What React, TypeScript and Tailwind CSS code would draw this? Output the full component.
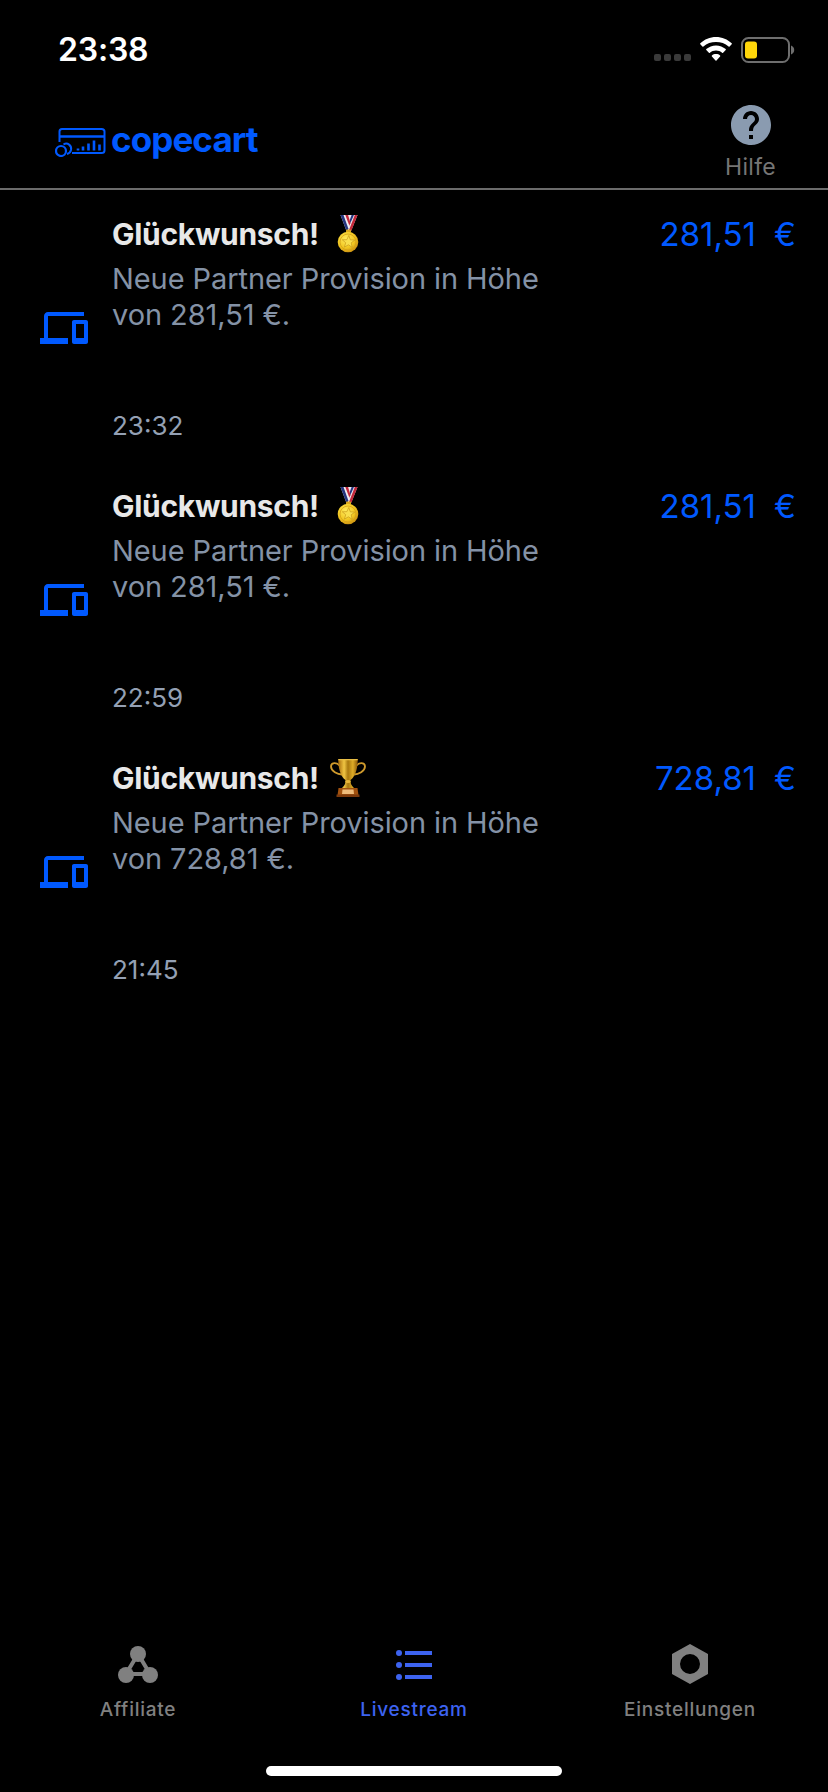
import { MdDevices, MdHelp } from 'react-icons/md'

type Award = 'medal' | 'trophy'

interface Sale {
  amount: string
  time: string
  award: Award
}

const sales: Sale[] = [
  { amount: '281,51', time: '23:32', award: 'medal' },
  { amount: '281,51', time: '22:59', award: 'medal' },
  { amount: '728,81', time: '21:45', award: 'trophy' },
]

function MedalIcon() {
  return (
    <svg className="h-10 w-10" viewBox="0 0 40 40">
      <defs>
        <radialGradient id="medal" cx="0.4" cy="0.35" r="0.7">
          <stop offset="0" stopColor="#ffe95c" />
          <stop offset="0.6" stopColor="#f2c822" />
          <stop offset="1" stopColor="#c98d10" />
        </radialGradient>
      </defs>
      <path d="M19.500 1h10l-6.500 16h-5z" fill="#e9e9f2" />
      <path d="M23.600 1h2.300l-6 14h-1.500z" fill="#24357f" />
      <path d="M26.800 1h2.700l-6 15.500h-2.700z" fill="#c4283a" />
      <path d="M12.500 1h7.600l2.400 8-2.500 8h-1.500z" fill="#f1eef4" />
      <path d="M12.500 1h3l4.800 13.500-.8 2.500h-1z" fill="#24357f" />
      <path d="M17.300 1h2.800l2.400 8-1.200 2.500z" fill="#c4283a" />
      <rect x="18" y="15.500" width="5" height="3.500" rx="1" fill="#d9a51c" />
      <circle cx="20" cy="28" r="10.300" fill="url(#medal)" />
      <circle cx="20" cy="28" r="8" fill="none" stroke="#d6a017" strokeWidth="0.800" />
      <path
        d="M20.800 21.500l1.500 4.300 4.500.3-3.600 2.700 1 4.500-3.800-2.500-4 2.300 1.300-4.400-3.400-2.900 4.500-.1z"
        fill="#f9df4d"
        stroke="#c99a18"
        strokeWidth="0.700"
      />
    </svg>
  )
}

function TrophyIcon() {
  return (
    <svg className="h-10 w-10" viewBox="0 0 40 40">
      <defs>
        <linearGradient id="cup" x1="0" x2="1" y1="0" y2="0">
          <stop offset="0" stopColor="#a86c0c" />
          <stop offset="0.3" stopColor="#f0c543" />
          <stop offset="0.5" stopColor="#a8780f" />
          <stop offset="0.750" stopColor="#deac27" />
          <stop offset="1" stopColor="#8a5607" />
        </linearGradient>
      </defs>
      <path
        d="M11.500 7.500C9 4.200 3 4 3 8.500c0 4.500 6.500 8 11 8M28.500 7.500C31 4.200 37 4 37 8.500c0 4.500-6.500 8-11 8"
        fill="none"
        stroke="#cf9a2c"
        strokeWidth="1.800"
      />
      <path
        d="M10.300 1h19.400c.2 9-2.200 17.500-7.200 21 0 3 .5 5.500 3.500 8H14c3-2.500 3.500-5 3.500-8-5-3.500-7.400-12-7.200-21z"
        fill="url(#cup)"
      />
      <path d="M10.300 1h19.400v1.300H10.300z" fill="#e7bd45" />
      <ellipse cx="20" cy="23.500" rx="2.800" ry="1.500" fill="#e9b83a" />
      <path d="M10.500 30h19l1 7.500h-21z" fill="#a3520f" />
      <path d="M8.500 36.500h23V39h-23z" fill="#7d3a0c" />
      <path d="M14.500 31.500h11l.5 4.500H14z" fill="#f0bd7c" />
    </svg>
  )
}

function StatusBar() {
  return (
    <div className="flex h-[100px] items-center justify-between pr-[33px] pl-[58px]">
      <span className="text-[32px] leading-9 font-semibold tracking-[-0.2px] text-white">
        23:38
      </span>
      <div className="flex items-center">
        <div className="mt-[15px] flex gap-[3px]">
          <span className="size-[7px] rounded-[2px] bg-[#3a3a3a]" />
          <span className="size-[7px] rounded-[2px] bg-[#3a3a3a]" />
          <span className="size-[7px] rounded-[2px] bg-[#3a3a3a]" />
          <span className="size-[7px] rounded-[2px] bg-[#3a3a3a]" />
        </div>
        <svg className="mb-0.5 ml-[9px] h-6 w-8" viewBox="0 0 32 24" fill="#fff">
          <path d="M16 0C10 0 4.400 2.300.3 6.300c-.3.3-.3.7 0 1l2.100 2.200c.3.300.7.300 1 0C6.800 6.300 11.200 4.900 16 4.900s9.200 1.400 12.600 4.600c.3.300.7.300 1 0l2.100-2.200c.3-.3.3-.7 0-1C27.600 2.300 22 0 16 0z" />
          <path d="M16 8.400c-3.700 0-7.100 1.400-9.700 3.700-.3.300-.3.700 0 1l2.600 2.600c.3.300.7.300 1 0 1.600-1.400 3.800-2.300 6.100-2.300s4.500.9 6.100 2.300c.3.300.7.300 1 0l2.600-2.600c.3-.3.3-.7 0-1-2.600-2.300-6-3.700-9.700-3.700z" />
          <path d="M16 17.100c-1.600 0-3 .5-4.100 1.400-.3.300-.3.700 0 1l3.600 3.900c.3.300.7.300 1 0l3.600-3.900c.3-.3.3-.7 0-1-1.100-.9-2.500-1.400-4.100-1.400z" />
        </svg>
        <svg className="ml-[9px] h-[26px] w-[54px]" viewBox="0 0 54 26">
          <rect x="1" y="1" width="47" height="24" rx="6.500" fill="none" stroke="#6e6e6e" strokeWidth="2" />
          <rect x="4" y="4.500" width="12" height="17" rx="3" fill="#ffd60a" />
          <path d="M50 8.500c2 .8 3.200 2.500 3.200 4.500S52 16.700 50 17.500z" fill="#6e6e6e" />
        </svg>
      </div>
    </div>
  )
}

function Logo() {
  return (
    <div className="flex items-center text-[#0059ff]">
      <svg className="mt-1.5 h-[30px] w-[52px]" viewBox="0 0 52 30" fill="none" stroke="currentColor" strokeWidth="2">
        <path d="M4.500 15V4.500C4.500 2.800 5.500 2 7 2h39.500C48 2 49.500 2.800 49.500 4.500v19c0 1.700-1.500 2.500-3 2.500H17" />
        <path d="M5 9.500h44.500" strokeWidth="2.600" />
        <circle cx="6" cy="24" r="5" strokeWidth="2.200" />
        <path d="M8.500 17.500c4-2.500 8.500 1 7.500 5.500-.5 2-2 3.500-4 4" />
        <path d="M23 23.500v-2M28 23.500v-4M33.500 23.500v-7M39 23.500v-10M44.500 23.500v-6" strokeWidth="2.600" />
      </svg>
      <span className="ml-1 text-[35px] leading-9 font-bold tracking-[-0.9px]">copecart</span>
    </div>
  )
}

function Header() {
  return (
    <header className="flex h-[90px] justify-between border-b-2 border-[#6b6b6b] pr-[52px] pl-[55px]">
      <div className="pt-[21px]">
        <Logo />
      </div>
      <div className="flex flex-col items-center">
        <MdHelp className="mt-px size-12 text-[#8a9bb0]" />
        <span className="mt-[2px] text-[23px] leading-8 tracking-[0.3px] text-[#757575]">Hilfe</span>
      </div>
    </header>
  )
}

function SaleRow({ sale }: { sale: Sale }) {
  return (
    <li className="flex h-[272px] pr-8 pl-10">
      <MdDevices className="size-12 shrink-0 self-center text-[#0059ff]" />
      <div className="ml-6 flex-1 pt-6 text-[#8492a6]">
        <div className="flex h-9 items-center">
          <h2 className="text-[30px] leading-9 font-bold tracking-[-0.3px] text-[#e8e8e8]">
            Glückwunsch!
          </h2>
          <span className="ml-[9px]">
            {sale.award === 'medal' ? <MedalIcon /> : <TrophyIcon />}
          </span>
        </div>
        <p className="mt-[9px] text-[29px] leading-9 tracking-[-0.08px] whitespace-nowrap">
          Neue Partner Provision in Höhe
          <br />
          von {sale.amount} €.
        </p>
        <p className="mt-[75px] text-[26px] leading-9 text-[#94a0b4]">{sale.time}</p>
      </div>
      <div className="flex gap-[18px] pt-6 text-[33px] leading-9 text-[#0059ff]">
        <span>{sale.amount}</span>
        <span>€</span>
      </div>
    </li>
  )
}

function TabBar() {
  return (
    <nav className="grid grid-cols-3 text-[19px] leading-7 font-medium tracking-[0.75px] text-[#808080]">
      <div className="flex flex-col items-center gap-2">
        <svg className="size-12" viewBox="0 0 48 48" fill="currentColor">
          <path d="M24 14L12 34h24z" fill="none" stroke="currentColor" strokeWidth="4" />
          <circle cx="24" cy="14" r="8" />
          <circle cx="12" cy="35" r="8" />
          <circle cx="36" cy="35" r="8" />
        </svg>
        <span>Affiliate</span>
      </div>
      <div className="flex flex-col items-center gap-2 text-[#3d63f0]">
        <svg className="size-12" viewBox="0 0 48 48" fill="currentColor">
          <circle cx="9" cy="13" r="3" />
          <circle cx="9" cy="25" r="3" />
          <circle cx="9" cy="37" r="3" />
          <path d="M15 11h27v4H15zM15 23h27v4H15zM15 35h27v4H15z" />
        </svg>
        <span>Livestream</span>
      </div>
      <div className="flex flex-col items-center gap-2">
        <svg className="size-12" viewBox="0 0 48 48" fill="currentColor">
          <path
            fillRule="evenodd"
            d="M24 4l18 10v20L24 44 6 34V14zM24 14a10 10 0 1 0 0 20 10 10 0 0 0 0-20z"
          />
        </svg>
        <span>Einstellungen</span>
      </div>
    </nav>
  )
}

export default function App() {
  return (
    <div className="flex h-[1792px] w-[828px] flex-col overflow-hidden bg-black font-[Inter,sans-serif]">
      <StatusBar />
      <Header />
      <ul className="flex-1 pt-0.5">
        {sales.map((sale) => (
          <SaleRow key={sale.time} sale={sale} />
        ))}
      </ul>
      <TabBar />
      <div className="mt-[42px] mb-4 h-2.5 w-[296px] self-center rounded-full bg-white" />
    </div>
  )
}
